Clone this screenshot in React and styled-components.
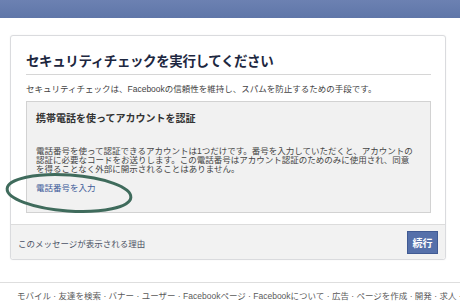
import React from 'react';
import styled, { createGlobalStyle } from 'styled-components';

const GlobalStyle = createGlobalStyle`
  html, body {
    margin: 0;
    padding: 0;
    background: #fff;
    width: 460px;
    height: 305px;
    overflow: hidden;
  }
  body {
    font-family: "Liberation Sans", "Noto Sans CJK JP", sans-serif;
    color: #333;
  }
`;

const TopBar = styled.div`
  height: 18px;
  background: linear-gradient(#6c81b2, #5f76a8);
`;

const Card = styled.div`
  margin: 17px 0 0 10px;
  width: 436px;
  box-sizing: border-box;
  border: 1px solid #dadbde;
  border-radius: 3px;
  box-shadow: 0 0 2px rgba(0, 0, 0, 0.06);
  background: #fff;
`;

const CardBody = styled.div`
  padding: 18px 14px 11px 15px;
`;

const Title = styled.h2`
  margin: 0;
  padding-bottom: 4px;
  border-bottom: 1px solid #d6d6d6;
  font-size: 13.5px;
  line-height: 16px;
  font-weight: bold;
  letter-spacing: -0.4px;
  color: #1d2740;
`;

const Lead = styled.p`
  margin: 8px 0 0;
  font-size: 8.5px;
  line-height: 12px;
  color: #444;
`;

const Box = styled.div`
  position: relative;
  margin-top: 6px;
  padding: 10px 9px 19px;
  border: 1px solid #d2d2d2;
  background: #f1f1f1;
`;

const BoxTitle = styled.h3`
  margin: 0;
  font-size: 10px;
  line-height: 14px;
  font-weight: bold;
  color: #333;
`;

const Text = styled.p`
  margin: 21px 0 0;
  font-size: 8.5px;
  line-height: 9px;
  color: #444;
`;

const Link = styled.a`
  display: block;
  margin-top: 10px;
  font-size: 8.5px;
  line-height: 9px;
  color: #3b5998;
  text-decoration: none;
`;

const Circle = styled.svg`
  position: absolute;
  left: -22px;
  top: 70px;
  overflow: visible;
`;

const CardFooter = styled.div`
  display: flex;
  align-items: center;
  justify-content: space-between;
  padding: 6px 7px 5px 7px;
  border-top: 1px solid #dcdcdc;
  background: #f2f2f2;
  border-radius: 0 0 3px 3px;
`;

const FooterLink = styled.span`
  font-size: 8.5px;
  color: #4b5366;
`;

const Button = styled.button`
  width: 31px;
  height: 23px;
  padding: 0;
  border: 1px solid #405a93;
  background: #5570aa;
  color: #fff;
  font-family: "Noto Sans CJK JP", sans-serif;
  font-size: 10px;
  font-weight: bold;
`;

const PageFooter = styled.div`
  margin-top: 22px;
  border-top: 1px solid #dedede;
  padding: 8px 0 0 17px;
  font-size: 8.5px;
  line-height: 10px;
  color: #5a5a5a;
  white-space: nowrap;
  overflow: hidden;
`;

const footerItems = [
  'モバイル',
  '友達を検索',
  'バナー',
  'ユーザー',
  'Facebookページ',
  'Facebookについて',
  '広告',
  'ページを作成',
  '開発',
  '求人',
  'プライバシー',
];

export default function App() {
  return (
    <>
      <GlobalStyle />
      <TopBar />
      <Card>
        <CardBody>
          <Title>セキュリティチェックを実行してください</Title>
          <Lead>セキュリティチェックは、Facebookの信頼性を維持し、スパムを防止するための手段です。</Lead>
          <Box>
            <BoxTitle>携帯電話を使ってアカウントを認証</BoxTitle>
            <Text>
              電話番号を使って認証できるアカウントは1つだけです。番号を入力していただくと、アカウントの
              <br />
              認証に必要なコードをお送りします。この電話番号はアカウント認証のためのみに使用され、同意
              <br />
              を得ることなく外部に開示されることはありません。
            </Text>
            <Link href="#">電話番号を入力</Link>
            <Circle width="128" height="42" viewBox="0 0 128 42">
              <ellipse
                cx="64"
                cy="21"
                rx="62"
                ry="18"
                fill="none"
                stroke="#3f6b5c"
                strokeWidth="3"
                transform="rotate(4 64 21)"
              />
            </Circle>
          </Box>
        </CardBody>
        <CardFooter>
          <FooterLink>このメッセージが表示される理由</FooterLink>
          <Button type="button">続行</Button>
        </CardFooter>
      </Card>
      <PageFooter>{footerItems.join(' · ')}</PageFooter>
    </>
  );
}
